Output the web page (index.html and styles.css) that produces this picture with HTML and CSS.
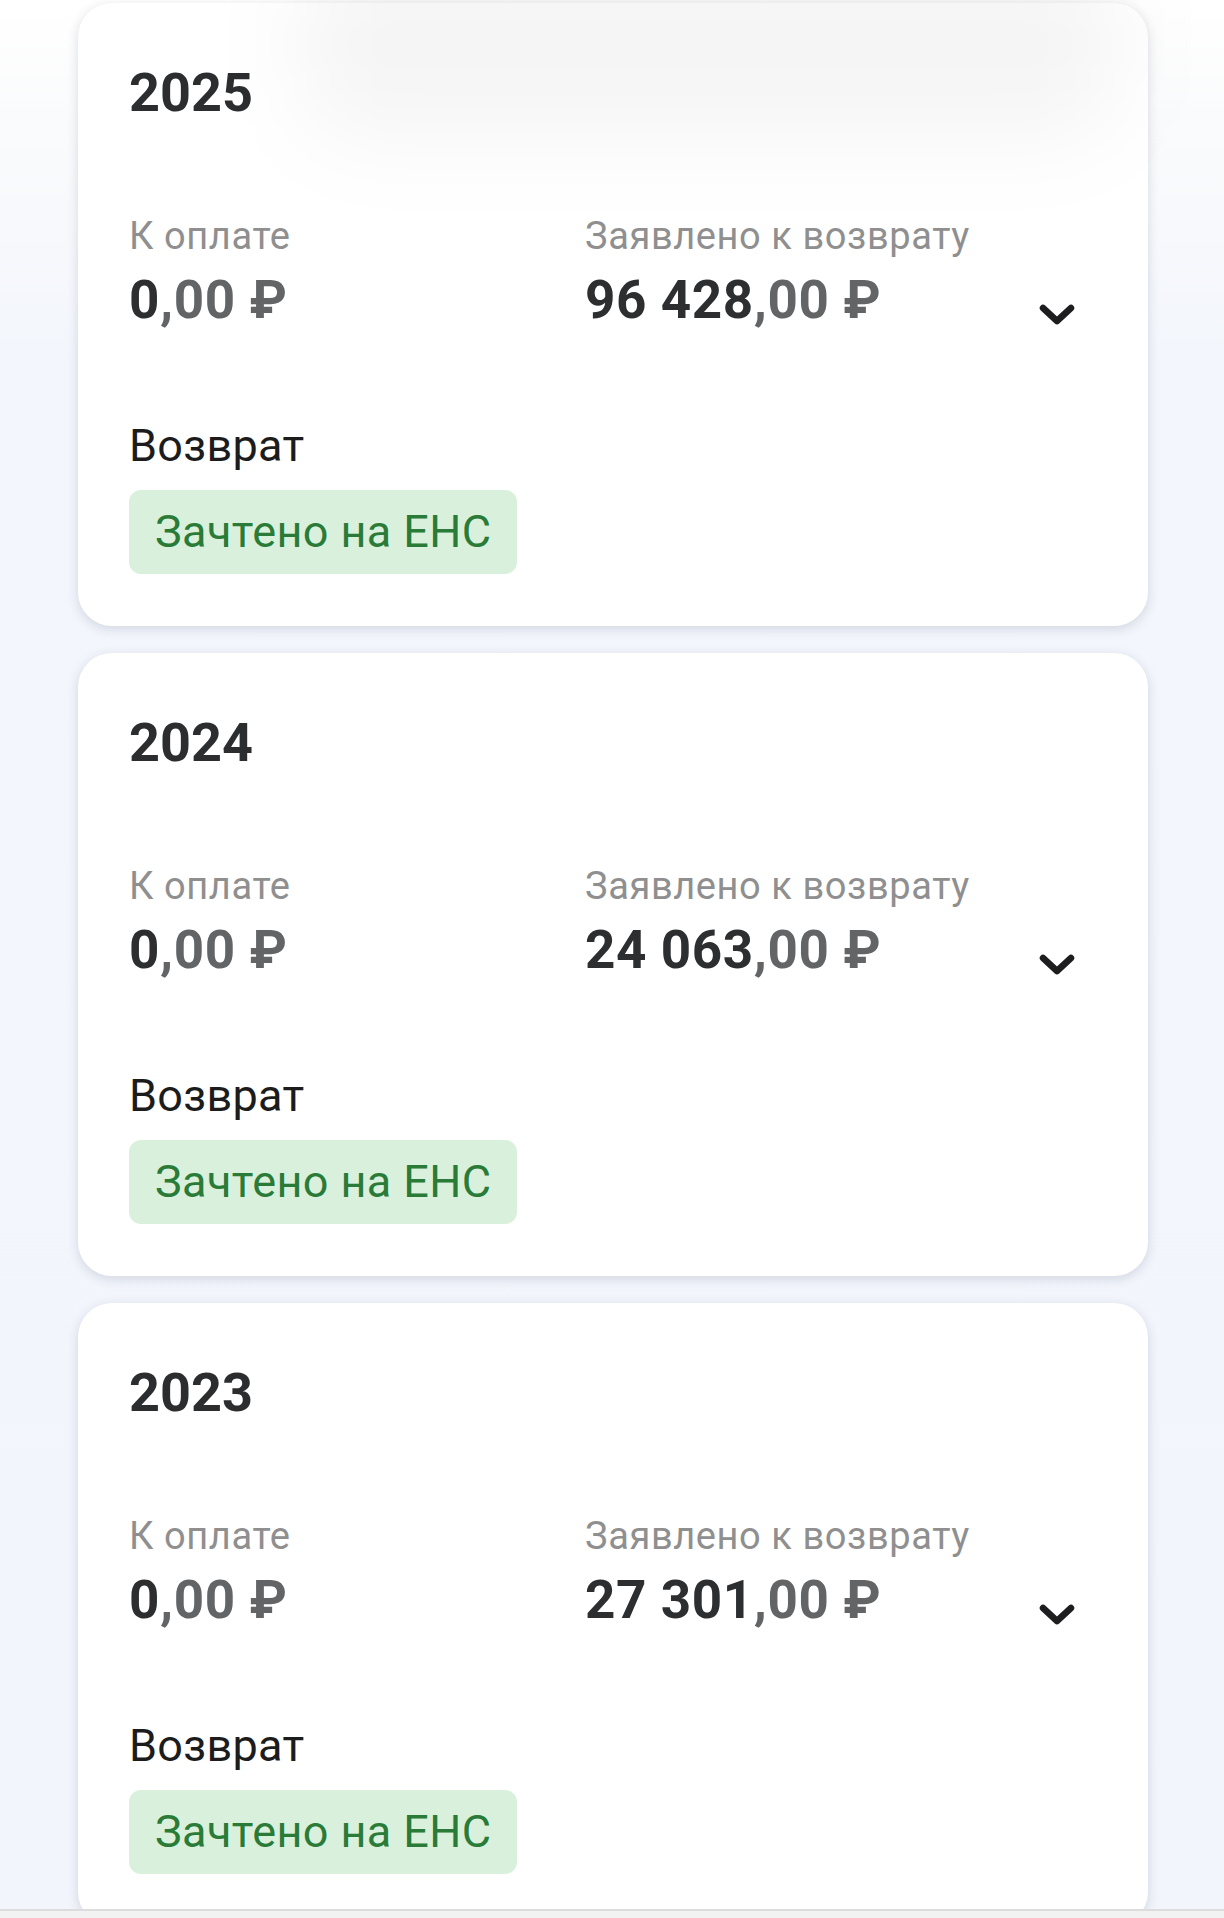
FILE: index.html
```html
<!DOCTYPE html>
<html lang="ru">
  <head>
    <meta charset="UTF-8" />
    <meta name="viewport" content="width=device-width, initial-scale=1.0" />
    <title>Декларации 3-НДФЛ</title>
    <link rel="stylesheet" href="styles.css">
  </head>
  <body>
    <div class="veil"></div>

    <div class="year-list" id="yearList"></div>

    <div class="bottom-bar"></div>

    <script>
      const years = [
        { year: "2025", pay: ["0", ",00 ₽"], refund: ["96 428", ",00 ₽"] },
        { year: "2024", pay: ["0", ",00 ₽"], refund: ["24 063", ",00 ₽"] },
        { year: "2023", pay: ["0", ",00 ₽"], refund: ["27 301", ",00 ₽"] },
      ];

      function money(parts) {
        return `${parts[0]}<span class="cents">${parts[1]}</span>`;
      }

      function renderYears() {
        const list = document.getElementById("yearList");
        list.innerHTML = "";
        years.forEach((item) => {
          const card = document.createElement("div");
          card.className = "year-card";
          card.innerHTML = `
            <div class="year-title">${item.year}</div>
            <div class="summary">
              <div class="col col-pay">
                <div class="label">К оплате</div>
                <div class="amount">${money(item.pay)}</div>
              </div>
              <div class="col col-refund">
                <div class="label">Заявлено к возврату</div>
                <div class="amount">${money(item.refund)}</div>
              </div>
              <svg class="chevron" viewBox="0 0 36 22" width="36" height="22">
                <path d="M4 4 L18 17 L32 4" fill="none" stroke="#1d1d1f" stroke-width="6.5" stroke-linecap="round" stroke-linejoin="round" />
              </svg>
            </div>
            <div class="refund-title">Возврат</div>
            <div class="status">Зачтено на ЕНС</div>
          `;
          list.appendChild(card);
        });
      }

      renderYears();
    </script>
  </body>
</html>
```

FILE: styles.css
```css
* {
  box-sizing: border-box;
  margin: 0;
  padding: 0;
}

body {
  font-family: Roboto, "Noto Sans", "DejaVu Sans", sans-serif;
  background: linear-gradient(180deg, #ffffff 0, #fafbfc 120px, #f3f6fc 360px, #f2f5fc 100%);
  min-height: 100vh;
  overflow: hidden;
}

.year-list {
  display: flex;
  flex-direction: column;
  gap: 27px;
  width: 1070px;
  margin-left: 78px;
  padding-top: 3px;
}

.year-card {
  background: #ffffff;
  border-radius: 34px;
  padding: 63px 54px 52px 51px;
  box-shadow: 0 3px 12px rgba(40, 50, 80, 0.16);
}

.year-title {
  font-size: 54px;
  line-height: 54px;
  font-weight: 700;
  color: #2b2d2f;
  margin-bottom: 93px;
}

.summary {
  display: flex;
  align-items: flex-end;
}

.col-pay {
  width: 456px;
}

.col-refund {
  flex: 1;
}

.label {
  font-size: 38px;
  line-height: 46px;
  letter-spacing: 0.6px;
  color: #8f8f8f;
  margin-bottom: 10px;
}

.amount {
  font-size: 53px;
  line-height: 62px;
  letter-spacing: 0.6px;
  font-weight: 700;
  color: #2d2e30;
  white-space: nowrap;
}

.cents {
  color: #636466;
}

.chevron {
  margin-right: 19px;
  margin-bottom: 5px;
}

.refund-title {
  font-size: 45px;
  line-height: 52px;
  letter-spacing: 0.3px;
  color: #1c1c1c;
  margin-top: 89px;
  margin-bottom: 18px;
}

.status {
  display: inline-block;
  height: 84px;
  line-height: 84px;
  padding: 0 26px;
  font-size: 45px;
  letter-spacing: 0.4px;
  color: #2a7a38;
  background: #d9f1dc;
  border-radius: 12px;
}

/* soft blurred shape lying over the top card */
.veil {
  position: absolute;
  top: -50px;
  left: 300px;
  width: 820px;
  height: 190px;
  background: rgba(0, 0, 0, 0.04);
  border-radius: 60px;
  filter: blur(45px);
  pointer-events: none;
  z-index: 2;
}

.bottom-bar {
  position: fixed;
  left: 0;
  right: 0;
  bottom: 0;
  height: 9px;
  background: #f2f2f2;
  border-top: 2px solid #dcdcdc;
  z-index: 3;
}
```
